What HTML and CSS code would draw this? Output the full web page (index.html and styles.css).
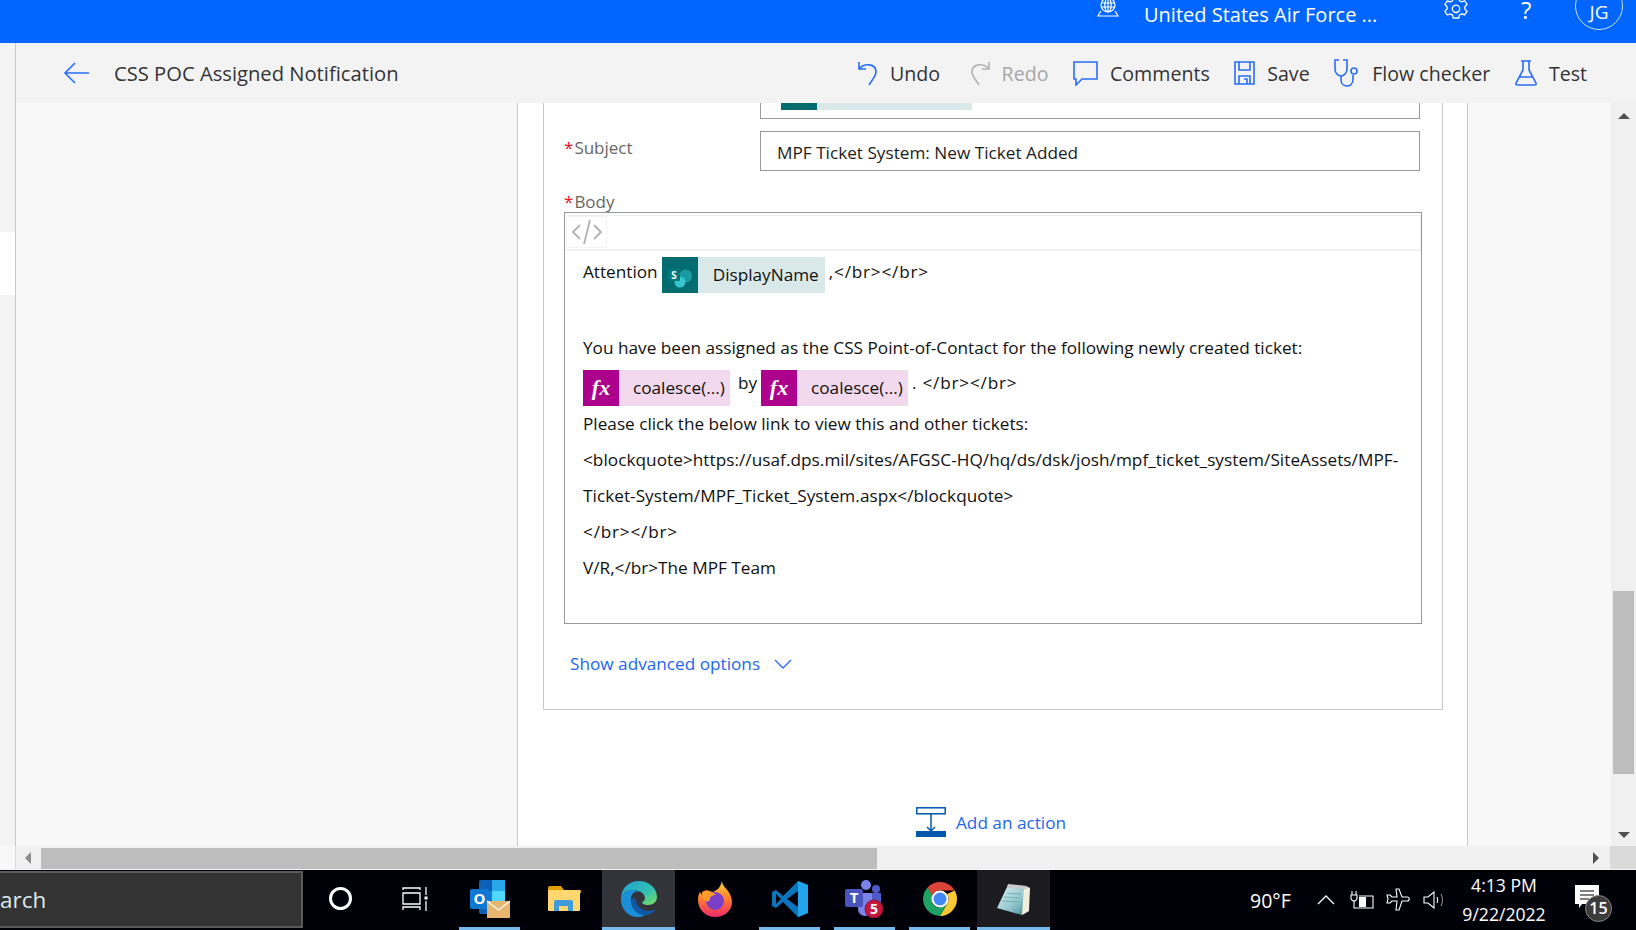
FILE: index.html
```html
<!DOCTYPE html>
<html lang="en">
<head>
    <meta charset="UTF-8">
    <title>CSS POC Assigned Notification</title>
    <link rel="stylesheet" href="styles.css">
</head>
<body>

    <div class="topbar">
        <svg class="env-icon" width="24" height="18" viewBox="0 0 24 18" fill="none" stroke="#fff" stroke-width="1.2">
            <circle cx="12" cy="5" r="7"/><ellipse cx="12" cy="5" rx="3.2" ry="7"/>
            <path d="M5 3h14M5 7h14M12 -2v14M5 11l-3 5h20l-3-5"/>
        </svg>
        <span class="env-name">United States Air Force ...</span>
        <svg class="gear-icon" width="24" height="22" viewBox="0 0 22 20" fill="none" stroke="#fff" stroke-width="1.2">
            <circle cx="11" cy="8" r="3.4"/>
            <path d="M8.5 -2h5l.7 2.6 2.2 1 2.5-1 2.3 3.4-2 1.9v2.4l2 2-2.4 3.3-2.4-1-2.2 1.100-.7 2.700h-5l-.7-2.700-2.200-1-2.500 1-2.300-3.400 2-1.900v-2.400l-2-2 2.400-3.300 2.400 1 2.200-1z"/>
        </svg>
        <span class="help">?</span>
        <span class="avatar">JG</span>
    </div>

    <div class="cmdbar">
        <div class="strip"></div>
        <svg class="back" width="26" height="22" viewBox="0 0 26 22" fill="none" stroke="#2a6df4" stroke-width="1.6"><path d="M12 1 2 11l10 10M2 11h24"/></svg>
        <span class="flow-title">CSS POC Assigned Notification</span>
        <div class="cmds">
            <span class="cmd">
                <svg width="20" height="26" viewBox="0 0 20 26" fill="none" stroke="#2a6df4" stroke-width="1.6"><path d="M1 2v7h7M1 9c5-6 17-6 17 3 0 4-4 8-7 13"/></svg>
                Undo
            </span>
            <span class="cmd off">
                <svg width="20" height="26" viewBox="0 0 20 26" fill="none" stroke="#b4b4b4" stroke-width="1.6"><path d="M19 2v7h-7M19 9C14 3 2 3 2 12c0 4 4 8 7 13"/></svg>
                Redo
            </span>
            <span class="cmd">
                <svg width="25" height="26" viewBox="0 0 25 26" fill="none" stroke="#2a6df4" stroke-width="1.6"><path d="M1 2h23v17H9l-6 6v-6H1z"/></svg>
                Comments
            </span>
            <span class="cmd">
                <svg width="21" height="24" viewBox="0 0 21 24" fill="none" stroke="#2a6df4" stroke-width="1.6"><path d="M1 1h19v22H1zM5 1v8h11V1M5 23v-8h11v8M10 18h3v5"/></svg>
                Save
            </span>
            <span class="cmd">
                <svg width="26" height="28" viewBox="0 0 26 28" fill="none" stroke="#2a6df4" stroke-width="1.6"><path d="M5 1H1v9c0 5 4 7 6 7s6-2 6-7V1H9"/><path d="M7 17v4c0 4 3 6 6 6s6-2 6-7v-4"/><circle cx="20" cy="12" r="3"/></svg>
                Flow checker
            </span>
            <span class="cmd">
                <svg width="22" height="26" viewBox="0 0 22 26" fill="none" stroke="#2a6df4" stroke-width="1.6"><path d="M6 1h10M8 1v9L1 23c-.5 1 0 2 1.500 2h17c1.500 0 2-1 1.500-2L14 10V1M4 17h14"/></svg>
                Test
            </span>
        </div>
    </div>

    <div class="main">
        <div class="strip">
            <div class="strip-tab"></div>
        </div>
        <div class="side-panel"></div>

        <div class="canvas">
            <div class="card">
                <div class="field to-field">
                    <span class="label"></span>
                    <div class="input to-input"><span class="cut-chip"><i></i></span></div>
                </div>
                <div class="field subject-field">
                    <span class="label"><b>*</b>Subject</span>
                    <div class="input">MPF Ticket System: New Ticket Added</div>
                </div>

                <div class="label body-label"><b>*</b>Body</div>
                <div class="editor">
                    <div class="ed-toolbar">
                        <span class="code-btn">
                            <svg width="32" height="26" viewBox="0 0 32 26" fill="none" stroke="#b0b0b0" stroke-width="1.8"><path d="M9 6 2 13l7 7M23 6l7 7-7 7M19 1l-6 24"/></svg>
                        </span>
                    </div>
                    <div class="ed-body">
                        <div class="ed-row">
                            <span class="ed-text">Attention</span>
                            <span class="chip chip-sp">
                                <span class="chip-icon">
                                    <svg width="26" height="26" viewBox="0 0 26 26">
                                        <circle cx="12" cy="8" r="7.500" fill="#036c70"/>
                                        <circle cx="18.500" cy="14" r="6.500" fill="#1a9ba1"/>
                                        <circle cx="13" cy="20" r="5.500" fill="#37c6d0"/>
                                        <rect x="1" y="7" width="12" height="12" rx="1" fill="#03787c"/>
                                        <text x="7" y="16.500" class="sp-s">S</text>
                                    </svg>
                                </span>
                                <span class="chip-name">DisplayName</span>
                            </span>
                            <span class="ed-text tag">,&lt;/br&gt;&lt;/br&gt;</span>
                        </div>
                        <div class="ed-row"></div>
                        <div class="ed-row">You have been assigned as the CSS Point-of-Contact for the following newly created ticket:</div>
                        <div class="ed-row chips-row">
                            <span class="chip chip-fx">
                                <span class="chip-icon">fx</span>
                                <span class="chip-name">coalesce(...)</span>
                            </span>
                            <span class="ed-text by">by</span>
                            <span class="chip chip-fx">
                                <span class="chip-icon">fx</span>
                                <span class="chip-name">coalesce(...)</span>
                            </span>
                            <span class="ed-text tag">. &lt;/br&gt;&lt;/br&gt;</span>
                        </div>
                        <div class="ed-para">
                            <div>Please click the below link to view this and other tickets:</div>
                            <div class="bq-line">&lt;blockquote&gt;https://usaf.dps.mil/sites/AFGSC-HQ/hq/ds/dsk/josh/mpf_ticket_system/SiteAssets/MPF-Ticket-System/MPF_Ticket_System.aspx&lt;/blockquote&gt;</div>
                            <div class="tag">&lt;/br&gt;&lt;/br&gt;</div>
                            <div>V/R,&lt;/br&gt;The MPF Team</div>
                        </div>
                    </div>
                </div>

                <div class="advanced">
                    Show advanced options
                    <svg width="18" height="10" viewBox="0 0 18 10" fill="none" stroke="#2a6df4" stroke-width="1.300"><path d="m1 1 8 8 8-8"/></svg>
                </div>
            </div>

            <div class="add-action">
                <svg width="30" height="30" viewBox="0 0 30 30" fill="none" stroke="#0058ad" stroke-width="1.500">
                    <rect x=".8" y=".8" width="28.400" height="6"/>
                    <path d="M15 7v17M11 20l4 4 4-4"/>
                    <rect x="0" y="24" width="30" height="6" fill="#0058ad" stroke="none"/>
                </svg>
                Add an action
            </div>
        </div>

        <div class="side-panel right-panel"></div>

        <div class="vscroll">
            <span class="arrow-up"></span>
            <div class="vthumb"></div>
            <span class="arrow-down"></span>
        </div>
    </div>

    <div class="hscroll">
        <div class="hscroll-gap"><span class="arrow-left"></span></div>
        <div class="hthumb"></div>
        <div class="hscroll-rest"><span class="arrow-right"></span></div>
        <div class="corner"></div>
    </div>

    <div class="taskbar">
        <div class="search"><span>arch</span></div>

        <div class="slot first-slot"><span class="cortana"></span></div>
        <div class="slot">
            <svg width="26" height="24" viewBox="0 0 26 24" fill="none" stroke="#fff" stroke-width="1.300">
                <path d="M1 3V1h17v2M1 6h17v11H1zM1 23v-3h17v3M24 0v8M24 14v10"/>
                <rect x="22.500" y="9.500" width="3" height="3" fill="#fff" stroke="none"/>
            </svg>
        </div>
        <div class="slot running">
            <svg width="40" height="38" viewBox="0 0 40 38">
                <rect x="9" y="0" width="26" height="34" rx="2" fill="#0a62b8"/>
                <rect x="22" y="0" width="13" height="11" fill="#28a8ea"/>
                <rect x="22" y="11" width="13" height="11" fill="#50d9ff"/>
                <rect x="9" y="11" width="13" height="11" fill="#0f78d4"/>
                <rect x="0" y="9" width="19" height="20" rx="2" fill="#0f78d4"/>
                <text x="9.500" y="24" class="ol-o">O</text>
                <rect x="17" y="21" width="23" height="17" fill="#e8b56f"/>
                <path d="m17 21 11.500 9L40 21" fill="none" stroke="#fff" stroke-width="1.200"/>
            </svg>
        </div>
        <div class="slot">
            <svg width="33" height="28" viewBox="0 0 33 28">
                <path d="M0 3a2 2 0 0 1 2-2h11l3 4h17v3H0z" fill="#e2a003"/>
                <rect x="0" y="5" width="32" height="21" rx="1" fill="#ffd76e"/>
                <path d="M6 26V17a2 2 0 0 1 2-2h15a2 2 0 0 1 2 2v9h-5v-5h-9v5z" fill="#3f9bd9"/>
            </svg>
        </div>
        <div class="slot running active">
            <svg width="38" height="38" viewBox="0 0 38 38">
                <defs>
                    <linearGradient id="edgeTop" x1="0" y1="0" x2="1" y2="1"><stop offset="0" stop-color="#1aa0d8"/><stop offset=".6" stop-color="#35c1b0"/><stop offset="1" stop-color="#7ee05a"/></linearGradient>
                </defs>
                <path d="M1 17C2 7 10 1 19 1c10 0 18 7 18 16 0 5-4 8-9 8-3 0-6-1-6-3 4-1 4-7-1-10C14 8 4 10 1 17z" fill="url(#edgeTop)"/>
                <path d="M1 17c3-7 13-9 20-5-7-2-11 3-10 10 1 6 6 12 14 13-3 2-6 2-8 2C8 37 0 28 1 17z" fill="#1b8fd8"/>
                <path d="M11 22c1 7 6 13 14 13 5 0 9-3 11-6-4 2-10 3-14 0-4-2-6-5-6-9-2-3-4-2-5 2z" fill="#0f5aa8"/>
            </svg>
        </div>
        <div class="slot">
            <svg width="34" height="36" viewBox="0 0 34 36">
                <defs>
                    <linearGradient id="foxBody" x1="0" y1="0" x2="0" y2="1"><stop offset="0" stop-color="#ffd43a"/><stop offset=".5" stop-color="#ff7a2f"/><stop offset="1" stop-color="#ee2a6a"/></linearGradient>
                </defs>
                <path d="M24 0c0 4 3 6 6 10 3 4 4 8 4 11 0 9-8 15-17 15C8 36 0 29 0 19c0-3 .5-6 2-8l2 3c1-2 2-4 5-5 0 2 1 3 3 3 3-1 5-2 8-4 2-2 3-5 4-8z" fill="url(#foxBody)"/>
                <circle cx="17" cy="20" r="9" fill="#7a3fc6"/>
                <path d="M4 11c5-3 10-1 14 3-3 0-6 1-6 4 0 3-4 3-6 1-2-2-2-5-2-8z" fill="#ff9a2e"/>
            </svg>
        </div>
        <div class="slot running">
            <svg width="36" height="36" viewBox="0 0 36 36">
                <path d="M26 0 11 15 4 9 0 11v14l4 2 7-6 15 15 10-4V4z" fill="#0a74bd"/>
                <path d="M26 0v36l10-4V4z" fill="#24a4ea"/>
                <path d="M26 10 15 18l11 8z" fill="#000008"/>
                <path d="M4 13v10l5-5z" fill="#000008"/>
            </svg>
        </div>
        <div class="slot running">
            <svg width="40" height="38" viewBox="0 0 40 38">
                <circle cx="21" cy="5" r="5" fill="#7b83eb"/>
                <circle cx="31" cy="9" r="4" fill="#5059c9"/>
                <path d="M13 13h14v16a7 7 0 0 1-14 0z" fill="#7b83eb"/>
                <path d="M27 13h9v11a5 5 0 0 1-9 3z" fill="#5059c9"/>
                <rect x="0" y="9" width="18" height="18" rx="2" fill="#4b53bc"/>
                <text x="9" y="23" class="teams-t">T</text>
                <circle cx="29" cy="29" r="9" fill="#c4173c" stroke="#8f1030"/>
                <text x="29" y="34" class="teams-n">5</text>
            </svg>
        </div>
        <div class="slot running">
            <svg width="34" height="34" viewBox="0 0 34 34">
                <path d="M17 0a17 17 0 0 1 14.700 8.500H17a8.500 8.500 0 0 0-8 5.500L4.500 5.500A17 17 0 0 1 17 0z" fill="#dc4437"/>
                <path d="M31.700 8.500A17 17 0 0 1 17 34l7.300-12.700A8.500 8.500 0 0 0 24 12z" fill="#fcc934"/>
                <path d="M17 34A17 17 0 0 1 4.500 5.500L9.800 14.500 9.600 21.500A8.500 8.500 0 0 0 17 25.500l7.300-4.200z" fill="#1ea362"/>
                <circle cx="17" cy="17" r="8.500" fill="#fff"/>
                <circle cx="17" cy="17" r="6.500" fill="#4285f4"/>
            </svg>
        </div>
        <div class="slot running active dim">
            <svg width="34" height="34" viewBox="0 0 34 34">
                <defs>
                    <linearGradient id="padFace" x1="0" y1="0" x2="1" y2="1"><stop offset="0" stop-color="#e4f6f8"/><stop offset=".6" stop-color="#8fc4cc"/><stop offset="1" stop-color="#3f7f8c"/></linearGradient>
                </defs>
                <path d="M11 3 31 5 32 29 25 33 0 26z" fill="url(#padFace)"/>
                <path d="M27 5h4l2 1-1 23-7 4z" fill="#f2eeda"/>
                <path d="M11 2 30 4 30 7 10 6z" fill="#c9c9c9"/>
                <path d="M9 11 24 12M7 15l16 1M5 19l17 1" stroke="#6aa5b0" stroke-width=".8"/>
            </svg>
        </div>

        <div class="tray">
            <span class="weather">90°F</span>
            <svg class="tray-chevron" width="18" height="10" viewBox="0 0 18 10" fill="none" stroke="#fff" stroke-width="1.300"><path d="m1 9 8-8 8 8"/></svg>
            <svg class="tray-battery" width="24" height="18" viewBox="0 0 24 18" fill="none" stroke="#fff" stroke-width="1.100">
                <path d="M2 0v4M6 0v4M1 4h6v3c0 2-2 3-3 3s-3-1-3-3zM4 10v7h19V5H9"/>
                <rect x="9" y="6" width="7" height="10" fill="#fff" stroke="none"/>
            </svg>
            <svg class="tray-plane" width="24" height="24" viewBox="0 0 24 24" fill="none" stroke="#fff" stroke-width="1.100"><path d="M10 1h3l3 8h5c3 0 3 4 0 4h-5l-3 9h-3l1-9H6l-2 2H1l1-4-1-4h3l2 2h5z"/></svg>
            <svg class="tray-speaker" width="23" height="18" viewBox="0 0 23 18" fill="none" stroke="#fff" stroke-width="1.100"><path d="M1 6h4l6-5v16l-6-5H1z"/><path d="M14 6c1 2 1 4 0 6"/><path d="M18 3c2 4 2 8 0 12" stroke="#888"/></svg>
            <div class="clock"><div>4:13 PM</div><div>9/22/2022</div></div>
            <div class="notify">
                <svg width="24" height="24" viewBox="0 0 24 24"><path d="M0 0h24v19H7l-3 4v-4H0z" fill="#fff"/><path d="M5 6h14M5 10h14M5 14h9" stroke="#000" stroke-width="1"/></svg>
                <span class="notify-count">15</span>
            </div>
        </div>
    </div>

</body>
</html>
```

FILE: styles.css
```css
* { box-sizing: border-box; }
html, body { height: 100%; }
body {
    margin: 0;
    width: 1636px;
    height: 930px;
    overflow: hidden;
    display: flex;
    flex-direction: column;
    font-family: "Open Sans", "Noto Sans", sans-serif;
    font-size: 17.2px;
    color: #1c1c1c;
    background: #fff;
}

/* top blue bar, the page is scrolled a bit so the icons are cut off */
.topbar {
    height: 43px;
    flex: none;
    background: #0066ff;
    color: #fff;
    display: flex;
    align-items: flex-start;
    overflow: hidden;
    padding-left: 1096px;
}
.env-icon { flex: none; }
.env-name { margin-left: 24px; font-size: 20px; line-height: 30px; width: 300px; }
.gear-icon { flex: none; }
.help { margin-left: 53px; font-size: 24px; line-height: 26px; width: 12px; margin-top: -3px; }
.avatar {
    margin-left: 42px;
    margin-top: -18px;
    width: 48px;
    height: 48px;
    border: 1px solid #cfe0ff;
    border-radius: 50%;
    font-size: 19px;
    display: flex;
    align-items: center;
    justify-content: center;
    padding-top: 11px;
}

.cmdbar {
    height: 60px;
    flex: none;
    background: #f3f3f3;
    display: flex;
    align-items: center;
}
.strip {
    width: 16px;
    height: 100%;
    flex: none;
    background: #f3f3f3;
    border-right: 1px solid #c8c8c8;
}
.back { margin-left: 47px; flex: none; }
.flow-title { margin-left: 25px; font-size: 20.2px; color: #333; }
.cmds {
    margin-left: auto;
    margin-right: 49px;
    display: flex;
    align-items: center;
    gap: 24.5px;
}
.cmd {
    display: flex;
    align-items: center;
    gap: 12px;
    font-size: 19.6px;
    color: #333;
}
.cmd:first-child { margin-right: 5px; }
.cmd.off { color: #a6a6a6; }

.main {
    flex: 1;
    min-height: 0;
    display: flex;
}
.strip-tab {
    height: 63px;
    margin-top: 129px;
    background: #fff;
}
.side-panel {
    width: 501px;
    flex: none;
    background: #f8f8f8;
}
.right-panel { width: 143px; }

.canvas {
    width: 951px;
    flex: none;
    background: #fff;
    border-left: 1px solid #c8c8c8;
    border-right: 1px solid #c8c8c8;
    padding-left: 25px;
}
.card {
    width: 900px;
    height: 607px;
    border: 1px solid #c8c8c8;
    border-top: none;
    padding-left: 20px;
}
.field { display: flex; }
.label { width: 196px; color: #666; font-size: 17px; }
.label b { color: #e81123; font-weight: 400; margin-right: 1px; }
.input {
    width: 660px;
    height: 40px;
    border: 1px solid #999;
    padding-left: 16px;
    line-height: 41px;
}
.to-field .input { height: 16px; border-top: none; overflow: hidden; }
.cut-chip {
    display: block;
    width: 191px;
    height: 7px;
    margin-left: 4px;
    background: #d9e8e8;
}
.cut-chip i { display: block; width: 36px; height: 7px; background: #036c70; }
.subject-field { margin-top: 12px; }
.subject-field .label { line-height: 34px; }
.body-label { line-height: 20px; margin-top: 21px; width: auto; }

.editor {
    width: 858px;
    height: 412px;
    border: 1px solid #999;
    padding: 2px 0 0 1px;
}
.ed-toolbar {
    height: 36px;
    border: 1px solid #f0f0f0;
    border-width: 1px 1px 2px 0;
}
.code-btn {
    display: flex;
    align-items: center;
    justify-content: center;
    width: 41px;
    height: 32px;
    border: 1px solid #f4f4f4;
}
.ed-body { padding: 6px 18px 0 17px; color: #111; }
.ed-row {
    min-height: 36px;
    display: flex;
    align-items: center;
    gap: 4px;
}
.ed-text { padding-bottom: 8px; }
.tag { letter-spacing: .8px; }
.bq-line { letter-spacing: .04px; }
.chips-row { margin-top: 5px; }
.chips-row .ed-text { padding-bottom: 11px; }
.by { margin-left: 4px; }
.chip { display: flex; height: 36px; line-height: 36px; }
.chip-icon {
    width: 36px;
    height: 36px;
    flex: none;
    display: flex;
    align-items: center;
    justify-content: center;
    color: #fff;
}
.chip-name { padding: 0 6px 0 15px; }
.chip-sp .chip-icon { background: #036c70; }
.chip-sp { background: #d9e8e8; }
.chip-fx .chip-icon {
    background: #ad008c;
    font-family: "Liberation Serif", serif;
    font-style: italic;
    font-weight: 700;
    font-size: 22px;
}
.chip-fx { background: #f3d9ee; }
.chip-fx .chip-name { padding: 0 5px 0 14px; }
.ed-para { line-height: 36px; }

.sp-s { fill: #fff; font-size: 10px; font-weight: 700; text-anchor: middle; }
.ol-o { fill: #fff; font-size: 15px; font-weight: 700; text-anchor: middle; }
.teams-t { fill: #fff; font-size: 15px; font-weight: 700; text-anchor: middle; }
.teams-n { fill: #fff; font-size: 14px; font-weight: 700; text-anchor: middle; }

.advanced {
    margin: 28px 0 0 6px;
    display: flex;
    align-items: center;
    gap: 14px;
    color: #2266f0;
}

.add-action {
    margin: 97px 0 0 373px;
    display: flex;
    align-items: center;
    gap: 10px;
    color: #2266f0;
}

.vscroll {
    width: 26px;
    flex: none;
    background: #f0f0f0;
    border-right: 1px solid #555;
    display: flex;
    flex-direction: column;
    align-items: center;
    padding-bottom: 8px;
}
.arrow-up {
    margin-top: 10px;
    border: 6px solid transparent;
    border-top: none;
    border-bottom: 6px solid #505050;
}
.vthumb {
    width: 21px;
    height: 183px;
    margin-top: 472px;
    background: #bdbdbd;
}
.arrow-down {
    margin-top: auto;
    border: 6px solid transparent;
    border-bottom: none;
    border-top: 6px solid #505050;
}

.hscroll {
    height: 24px;
    flex: none;
    display: flex;
    background: #f0f0f0;
    border-bottom: 1px solid #f4f4f4;
}
.hscroll-gap {
    width: 41px;
    height: 100%;
    display: flex;
    align-items: center;
    justify-content: center;
    border-left: 15px solid #f8f8f8;
    box-shadow: inset 1px 0 #dcdcdc;
}
.arrow-left {
    border: 6px solid transparent;
    border-left: none;
    border-right: 6px solid #8a8a8a;
}
.hthumb {
    width: 836px;
    height: 21px;
    margin-top: 2px;
    background: #bdbdbd;
}
.hscroll-rest {
    flex: 1;
    display: flex;
    align-items: center;
    justify-content: flex-end;
    padding-right: 11px;
}
.arrow-right {
    border: 6px solid transparent;
    border-right: none;
    border-left: 6px solid #505050;
}
.corner { width: 26px; background: #dadada; }

.taskbar {
    height: 60px;
    flex: none;
    background: #000008;
    display: flex;
    align-items: stretch;
    color: #fff;
}
.search {
    width: 303px;
    flex: none;
    margin: 1px 0 2px;
    background: #333;
    border: 2px solid #5a5a5a;
    border-left: none;
    overflow: hidden;
    display: flex;
    align-items: center;
    font-size: 22.5px;
    color: #dfe8f0;
}
.slot {
    width: 75px;
    flex: none;
    position: relative;
    display: flex;
    align-items: center;
    justify-content: center;
    padding-bottom: 3px;
}
.first-slot { width: 74px; }
.slot.running::after {
    content: "";
    position: absolute;
    left: 7px;
    right: 7px;
    bottom: 0;
    height: 3px;
    background: #76b9ed;
}
.slot.active { background: #33343a; border-right: 2px solid #000008; }
.slot.active::after { left: 0; right: 0; }
.slot.dim { background: #1c1c20; }
.cortana {
    width: 23px;
    height: 23px;
    border: 3px solid #fff;
    border-radius: 50%;
}

.tray {
    flex: 1;
    display: flex;
    align-items: center;
    padding-left: 198px;
}
.weather { font-size: 19.5px; width: 67px; flex: none; }
.tray-chevron { flex: none; }
.tray-battery { margin-left: 15px; flex: none; }
.tray-plane { margin-left: 12px; flex: none; }
.tray-speaker { margin-left: 13px; flex: none; }
.clock {
    width: 116px;
    flex: none;
    text-align: center;
    font-size: 17.6px;
    line-height: 29px;
}
.notify { position: relative; width: 24px; height: 24px; margin: -6px 0 0 13px; flex: none; }
.notify-count {
    position: absolute;
    left: 10px;
    top: 10px;
    width: 27px;
    height: 27px;
    border-radius: 50%;
    background: #3c3c3c;
    border: 1px solid #888;
    font-size: 16px;
    line-height: 25px;
    text-align: center;
    font-weight: 600;
}
```
